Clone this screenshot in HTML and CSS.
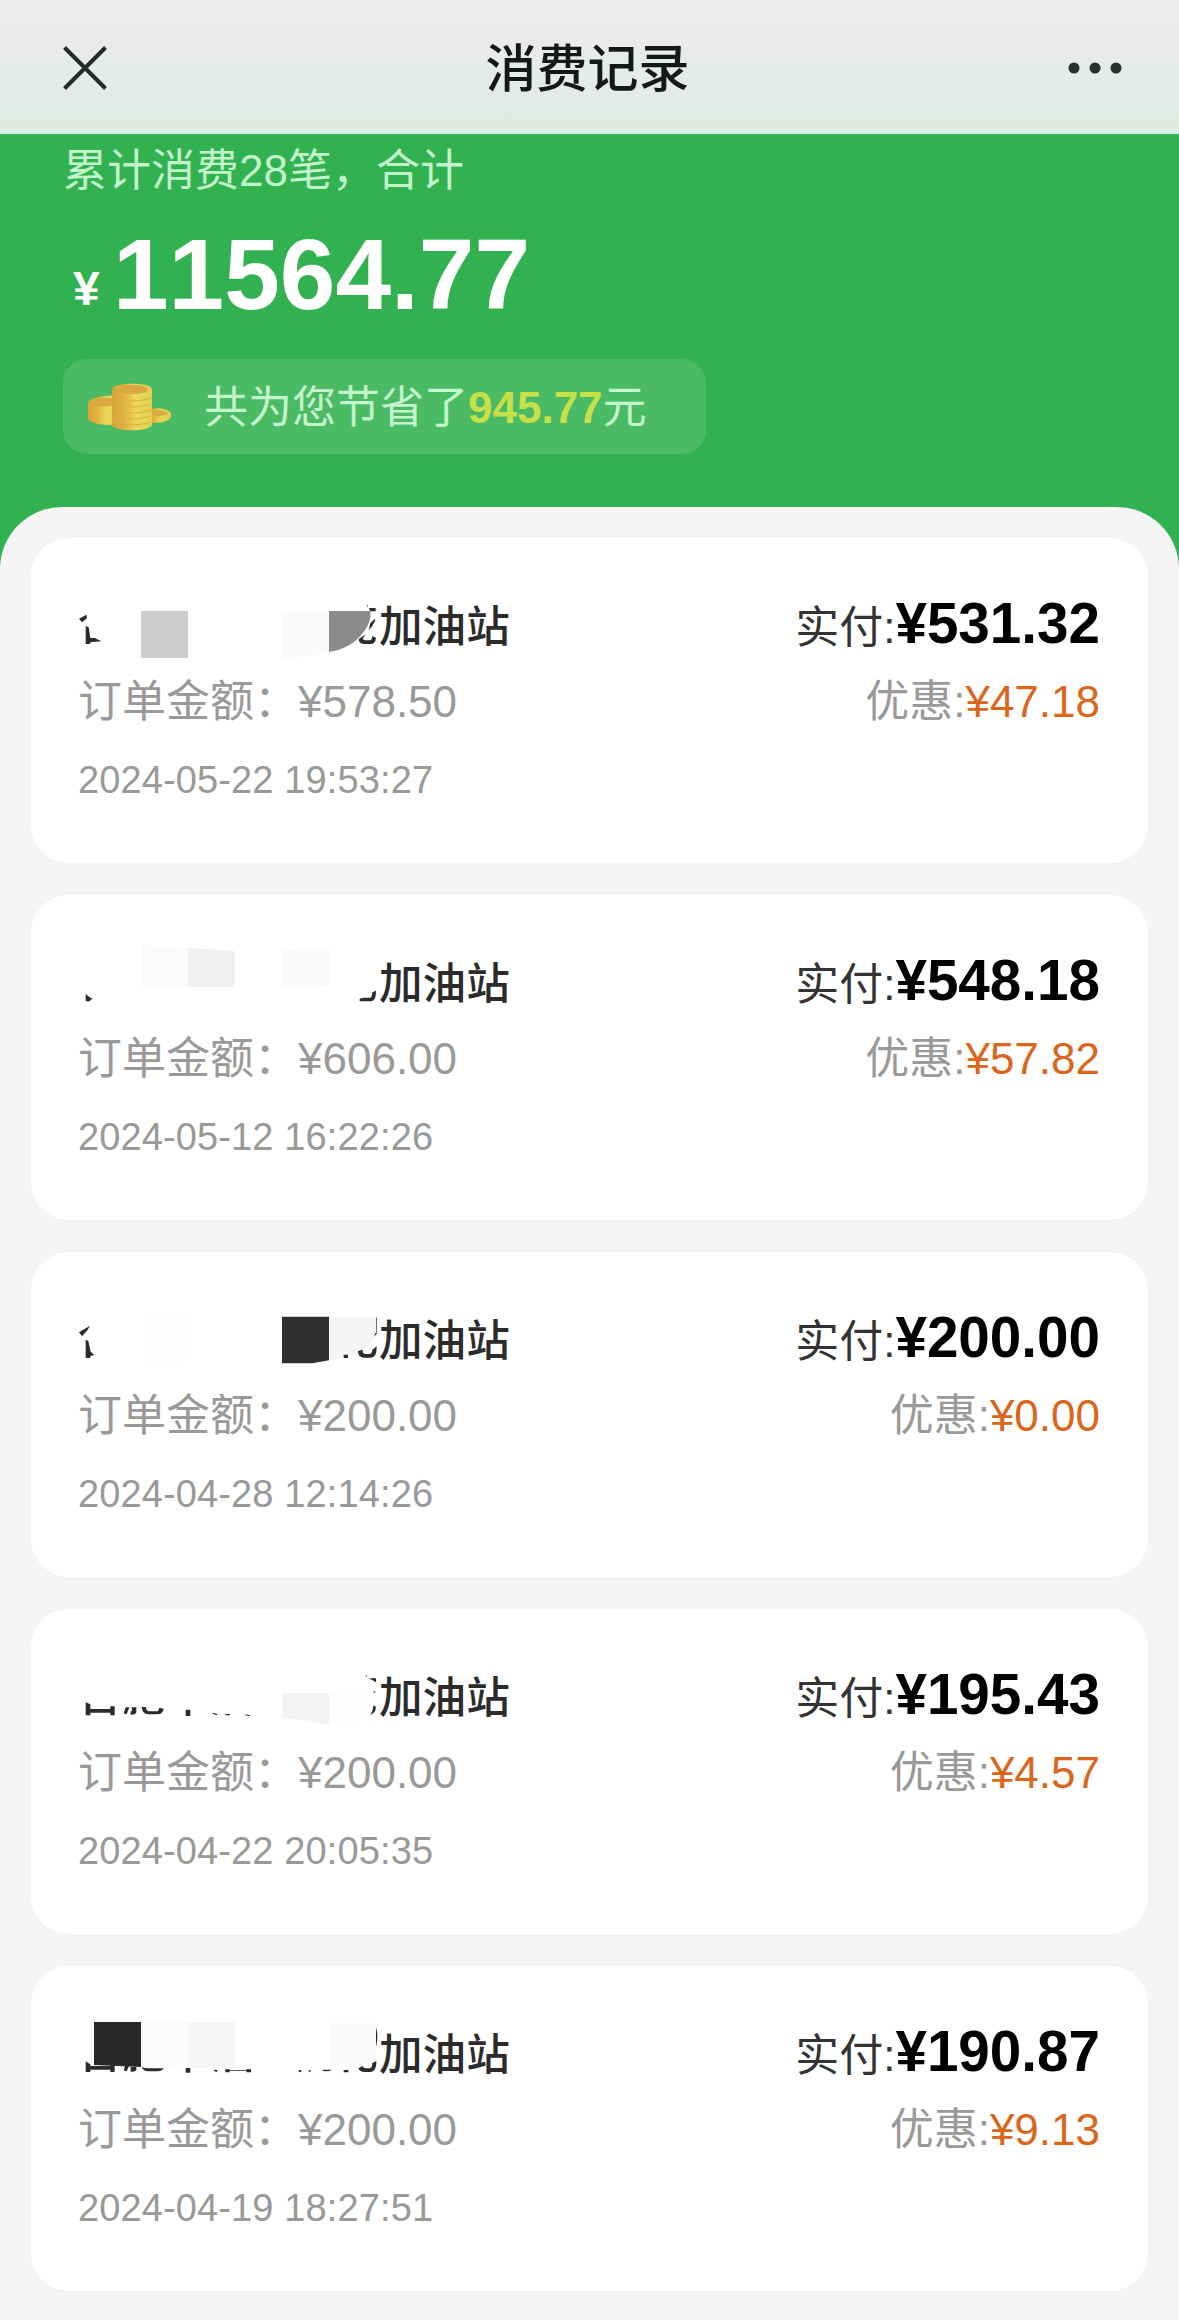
FILE: index.html
```html
<!DOCTYPE html>
<html lang="zh-CN">
<head>
<meta charset="utf-8">
<title>消费记录</title>
<link rel="stylesheet" href="styles.css">
</head>
<body>
<header class="navbar">
  <svg class="close" viewBox="0 0 44 44"><path d="M1.5 1.5 42.5 42.5M42.5 1.5 1.5 42.5"/></svg>
  <h1 class="title">消费记录</h1>
  <svg class="more" viewBox="0 0 54 12"><circle cx="6" cy="6" r="5.5"/><circle cx="27" cy="6" r="5.5"/><circle cx="48" cy="6" r="5.5"/></svg>
</header>
<section class="summary">
  <p class="caption">累计消费28笔，合计</p>
  <p class="total"><span class="currency">¥</span><span class="sum">11564.77</span></p>
  <div class="saved">
    <svg class="coins" viewBox="0 0 84 48">
      <defs>
        <linearGradient id="gold" x1="0" x2="1" y1="0" y2="0"><stop offset="0" stop-color="#d9a437"/><stop offset=".3" stop-color="#e0b13f"/><stop offset=".6" stop-color="#ecd858"/><stop offset="1" stop-color="#e2cf52"/></linearGradient>
      </defs>
      <path fill="url(#gold)" d="M0 20C2 14 22 11 30 14V41C20 43 5 42 0 36Z"/>
      <ellipse cx="15" cy="19" rx="13" ry="4.500" fill="#d9ab40"/>
      <path fill="url(#gold)" d="M58 28C66 23 82 25 83 31V34C80 40 66 41 58 39Z"/>
      <ellipse cx="71" cy="30" rx="9" ry="3" fill="#d9ac42"/>
      <path fill="url(#gold)" d="M24 6C26-1 62-1 64 6V42C61 49 27 49 24 42Z"/>
      <ellipse cx="44" cy="6.500" rx="16" ry="4.500" fill="#d9a83e"/>
      <path class="rim" d="M25 15Q44 21 63 15M25 21Q44 27 63 21M25 27Q44 33 63 27M25 33Q44 39 63 33M25 39Q44 45 63 39"/>
    </svg>
    <p class="saved-text">共为您节省了<b>945.77</b>元</p>
  </div>
</section>
<main class="sheet">
  <article class="card">
    <div class="row">
      <h2 class="name"><svg class="mask" viewBox="54 48 909 228">
        <path fill="#cdcdcd" d="M243 123h141v141H243z"/><path fill="#fafafa" d="M667 123h140v123l-50 12-90 6z"/><path fill="#8b8b8b" d="M807 123h124q4 35-22 65-34 46-102 58z"/>
        <path fill="#2b2b2b" d="M57 146 79 134 81 145 66 157ZM77 168 86 172 91 204H105L124 214 91 217V222H77ZM920 102 925 110 922 110ZM927 114H947V124H930ZM931 160 944 147 946 151 937 168 926 181ZM917 192 909 204Q908 211 917 211H930Q936 210 937 198L948 203Q946 222 931 222H911Q897 221 896 208Z"/>
      </svg><span class="station">加油站</span></h2>
      <p class="paid">实付:<b>¥531.32</b></p>
    </div>
    <div class="row"><p>订单金额：¥578.50</p><p>优惠:<span class="off">¥47.18</span></p></div>
    <time class="time">2024-05-22 19:53:27</time>
  </article>
  <article class="card">
    <div class="row">
      <h2 class="name"><svg class="mask" viewBox="54 68 909 228">
        <path fill="#fbfbfb" d="M246 72 388 84V199L246 205Z"/><path fill="#f0f0f0" d="M385 83 524 92V200H385Z"/><path fill="#fafafa" d="M668 90 807 84V197L668 203Z"/>
        <path fill="#2b2b2b" d="M77 221 88 230 99 236 91 238V243H77ZM899 235 911 232H931Q936 231 937 216L948 211Q949 243 931 243H899Z"/>
      </svg><span class="station">加油站</span></h2>
      <p class="paid">实付:<b>¥548.18</b></p>
    </div>
    <div class="row"><p>订单金额：¥606.00</p><p>优惠:<span class="off">¥57.82</span></p></div>
    <time class="time">2024-05-12 16:22:26</time>
  </article>
  <article class="card">
    <div class="row">
      <h2 class="name"><svg class="mask" viewBox="54 58 909 228">
        <path fill="#fdfdfd" d="M252 112H388V242H252Z"/><path fill="#303030" d="M666 108H807V239L758 248H666Z"/><path fill="#f5f5f5" d="M807 108H948V160Q925 208 880 222L807 239Z"/>
        <path fill="#2b2b2b" d="M57 155 90 135 82 149 66 167ZM77 177 85 181 92 213 103 223 91 226V232H77ZM851 222H864V232H851ZM948 111 950 110V160L941 168 948 155ZM894 211 908 207Q906 219 915 220H929Q936 219 937 207L950 197Q951 231 932 231H911Q894 229 894 211Z"/>
      </svg><span class="station">加油站</span></h2>
      <p class="paid">实付:<b>¥200.00</b></p>
    </div>
    <div class="row"><p>订单金额：¥200.00</p><p>优惠:<span class="off">¥0.00</span></p></div>
    <time class="time">2024-04-28 12:14:26</time>
  </article>
  <article class="card">
    <div class="row">
      <h2 class="name"><svg class="mask" viewBox="54 48 909 228">
        <path fill="#f3f3f3" d="M667 156H807V252L740 238 667 231Z"/><path fill="#fdfdfd" d="M807 160H930V235L807 252Z"/>
        <path fill="#2b2b2b" d="M77 184 91 190V204H151V196H164V223H151V215H91V223H77ZM197 199H208L200 220 191 217ZM215 199H229V214Q227 222 212 221V211H216ZM245 198H258Q258 210 267 211H289Q296 211 298 200L311 203Q308 220 293 220H265Q246 219 245 198ZM377 206H391V225H377ZM458 215 472 219 471 223 459 219ZM496 219H510V223H496ZM556 220 570 223 569 226 556 223ZM916 101 922 105 920 108ZM927 112H948V124ZM940 148 947 154 942 155ZM940 193 948 198Q947 217 930 222Q939 214 940 193Z"/>
      </svg><span class="station">加油站</span></h2>
      <p class="paid">实付:<b>¥195.43</b></p>
    </div>
    <div class="row"><p>订单金额：¥200.00</p><p>优惠:<span class="off">¥4.57</span></p></div>
    <time class="time">2024-04-22 20:05:35</time>
  </article>
  <article class="card">
    <div class="row">
      <h2 class="name"><svg class="mask" viewBox="54 69 909 228">
        <path fill="#fbfbfb" d="M243 93H384V220L243 232Z"/><path fill="#f6f6f6" d="M384 93H524V232H384Z"/><path fill="#fafafa" d="M807 97H948V205L900 228 807 225Z"/>
        <path fill="#282828" d="M102 93H243V228L102 222Z"/>
        <path fill="#2b2b2b" d="M77 211 91 220V225H151V220H164V243H151V236H91V243H77ZM195 225H207L200 241 191 238ZM212 228H229V238Q225 243 212 242ZM246 228Q252 232 265 232H311Q306 241 293 241H265Q248 240 246 228ZM377 231H391V245H377ZM459 236 473 237 469 244ZM496 235H509V244H496ZM509 237H559V239H509ZM559 235H573V244H559ZM716 236 726 239 722 244 716 242ZM746 237 755 239 747 244ZM787 236H816Q808 242 790 240ZM851 237H865V244H851ZM948 108Q956 136 948 168ZM895 232 908 225Q910 232 917 232H930Q937 231 937 216L949 210Q950 243 931 243H911Q899 242 895 232Z"/>
      </svg><span class="station">加油站</span></h2>
      <p class="paid">实付:<b>¥190.87</b></p>
    </div>
    <div class="row"><p>订单金额：¥200.00</p><p>优惠:<span class="off">¥9.13</span></p></div>
    <time class="time">2024-04-19 18:27:51</time>
  </article>
</main>
</body>
</html>
```
FILE: styles.css
```css
* { box-sizing: border-box; margin: 0; padding: 0; }
body {
  width: 1179px;
  height: 2320px;
  overflow: hidden;
  background: #32b150;
  color: #999;
  font: 44px/76px "Liberation Sans", "Noto Sans CJK SC", sans-serif;
  font-kerning: none;
}
svg { display: block; flex: none; }
.navbar {
  display: flex;
  align-items: center;
  justify-content: space-between;
  height: 134px;
  padding: 1px 57px 0 63px;
  background: linear-gradient(#eeefed, #e9ebea 32%, #dfebe3);
}
.close { width: 44px; height: 44px; fill: none; stroke: #252927; stroke-width: 4; }
.title { padding-top: 5px; font-size: 51px; font-weight: 500; color: #141816; }
.more { width: 54px; height: 12px; fill: #2a2e2c; }
.summary { height: 373px; padding-left: 63px; color: #c2f5cb; }
.caption { height: 76px; line-height: 74px; }
.total { display: flex; height: 149px; line-height: 128px; color: #fff; font-weight: 700; }
.currency { width: 50px; padding: 15px 0 0 10px; font-size: 48px; }
.sum { font-size: 100px; }
.saved {
  display: flex;
  align-items: center;
  gap: 32px;
  width: 643px;
  height: 95px;
  padding-left: 25px;
  border-radius: 24px;
  background: #4aba64;
}
.saved-text { padding-top: 2px; }
.saved b { color: #c6e04a; }
.coins { width: 84px; height: 48px; }
.rim { fill: none; stroke: #d8b544; stroke-width: 1; }
.sheet {
  display: flex;
  flex-direction: column;
  gap: 32px;
  height: 1813px;
  padding: 31px;
  border-radius: 62px 62px 0 0;
  background: #f5f5f5;
}
.card {
  flex: none;
  height: 325px;
  padding: 48px 48px 0 47px;
  border-radius: 38px;
  background: #fff;
}
.row { display: flex; justify-content: space-between; height: 78px; }
.name { display: flex; font-size: 43.600px; font-weight: 500; color: #2b2b2b; }
.mask { width: 303px; height: 76px; overflow: visible; }
.station { padding-top: 3px; margin-left: -2px; }
.paid { color: #333; }
.paid b { font-size: 56.600px; color: #000; }
.off { color: #dc651c; }
.time { display: block; font-size: 38px; line-height: 76px; letter-spacing: 0.120px; }
```
